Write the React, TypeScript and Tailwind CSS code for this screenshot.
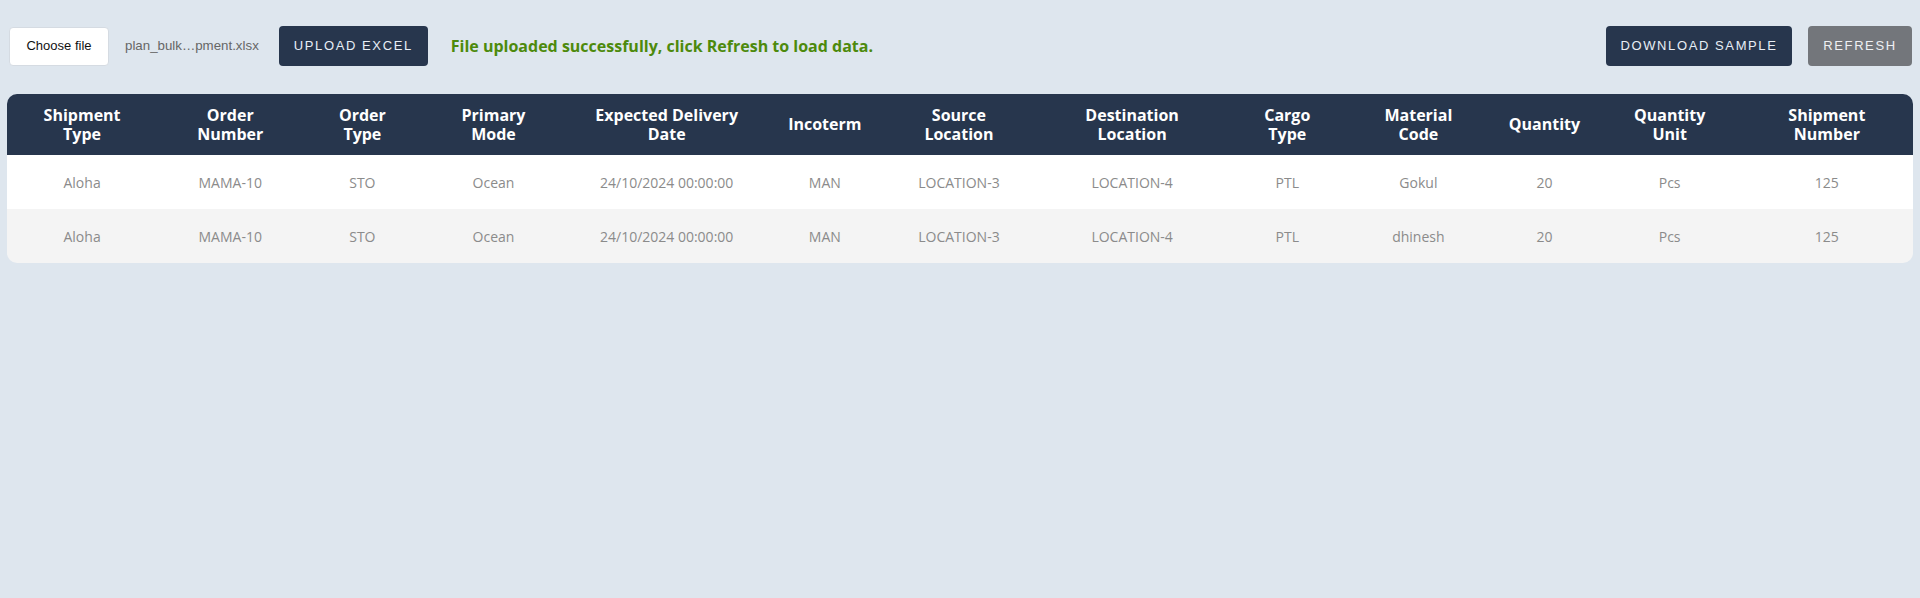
import React from 'react';

const columns = [
  { label: ['Shipment', 'Type'], w: 'w-[150px]' },
  { label: ['Order', 'Number'], w: 'w-[146px]' },
  { label: ['Order', 'Type'], w: 'w-[118px]' },
  { label: ['Primary', 'Mode'], w: 'w-[144px]' },
  { label: ['Expected Delivery', 'Date'], w: 'w-[202px]' },
  { label: ['Incoterm'], w: 'w-[114px]' },
  { label: ['Source', 'Location'], w: 'w-[154px]' },
  { label: ['Destination', 'Location'], w: 'w-[192px]' },
  { label: ['Cargo', 'Type'], w: 'w-[118px]' },
  { label: ['Material', 'Code'], w: 'w-[144px]' },
  { label: ['Quantity'], w: 'w-[108px]' },
  { label: ['Quantity', 'Unit'], w: 'w-[142px]' },
  { label: ['Shipment', 'Number'], w: 'w-[172px]' },
];

const rows = [
  ['Aloha', 'MAMA-10', 'STO', 'Ocean', '24/10/2024 00:00:00', 'MAN', 'LOCATION-3', 'LOCATION-4', 'PTL', 'Gokul', '20', 'Pcs', '125'],
  ['Aloha', 'MAMA-10', 'STO', 'Ocean', '24/10/2024 00:00:00', 'MAN', 'LOCATION-3', 'LOCATION-4', 'PTL', 'dhinesh', '20', 'Pcs', '125'],
];

export default function App() {
  return (
    <div className="min-h-[598px] w-full bg-[#dee6ee] px-[7px] pt-[26px] font-['Open_Sans',sans-serif]">
      <div className="flex items-center justify-between">
        <div className="flex items-center">
          <button className="ml-[2px] h-[39px] w-[100px] rounded-[4px] border border-[#d5dbe2] bg-white text-[13px] text-[#111] font-['Liberation_Sans',Arial,sans-serif]">
            Choose file
          </button>
          <span className="ml-[16px] text-[13.3px] text-[#666] font-['Liberation_Sans',Arial,sans-serif]">
            plan_bulk…pment.xlsx
          </span>
          <button className="ml-[20px] h-[40px] w-[149px] rounded-[4px] bg-[#27364d] text-[13px] tracking-[1.6px] text-[#e8eef6] font-['Liberation_Sans',Arial,sans-serif]">
            UPLOAD EXCEL
          </button>
          <span className="ml-[23px] text-[16px] font-bold text-[#4d8a0c]">
            File uploaded successfully, click Refresh to load data.
          </span>
        </div>
        <div className="flex items-center gap-[16px] pr-[1px]">
          <button className="h-[40px] w-[186px] rounded-[4px] bg-[#27364d] text-[13px] tracking-[1.6px] text-[#e8eef6] font-['Liberation_Sans',Arial,sans-serif]">
            DOWNLOAD SAMPLE
          </button>
          <button className="h-[40px] w-[104px] rounded-[4px] bg-[#73767b] text-[13px] tracking-[1.6px] text-[#eef0f3] font-['Liberation_Sans',Arial,sans-serif]">
            REFRESH
          </button>
        </div>
      </div>

      <div className="mt-[28px] overflow-hidden rounded-[10px]">
        <table className="w-full table-fixed border-collapse">
          <colgroup>
            {columns.map((c, i) => (
              <col key={i} className={c.w} />
            ))}
          </colgroup>
          <thead>
            <tr className="h-[61px] bg-[#27364d]">
              {columns.map((c, i) => (
                <th key={i} className="px-2 text-center text-[16px] font-bold leading-[19px] text-white">
                  {c.label.map((l, j) => (
                    <div key={j}>{l}</div>
                  ))}
                </th>
              ))}
            </tr>
          </thead>
          <tbody>
            {rows.map((r, i) => (
              <tr key={i} className={`h-[54px] ${i % 2 === 0 ? 'bg-white' : 'bg-[#f4f4f4]'}`}>
                {r.map((v, j) => (
                  <td key={j} className="px-2 text-center text-[14px] text-[#8b8b8b]">
                    {v}
                  </td>
                ))}
              </tr>
            ))}
          </tbody>
        </table>
      </div>
    </div>
  );
}
